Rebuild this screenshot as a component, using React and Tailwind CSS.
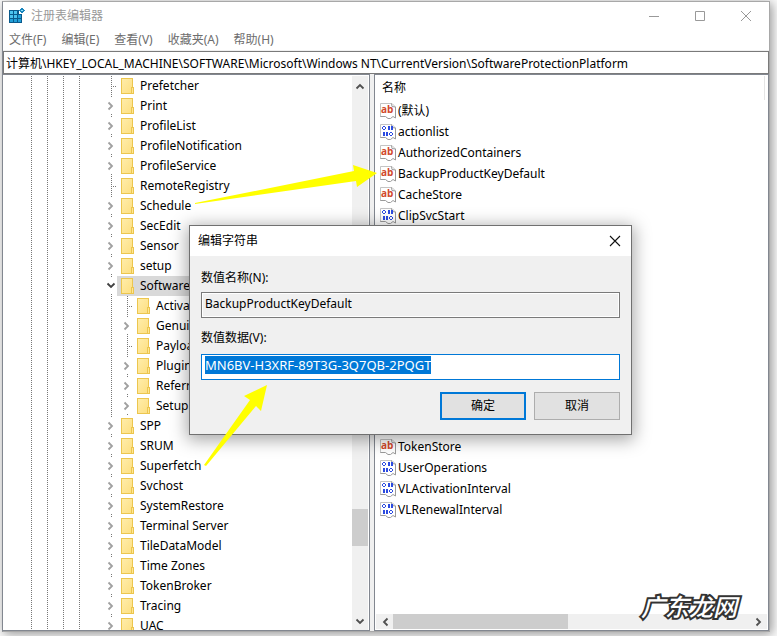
import { useEffect, useRef } from "react"

const menus = ["文件(F)", "编辑(E)", "查看(V)", "收藏夹(A)", "帮助(H)"]

const keys = [
  { name: "Prefetcher", leaf: true },
  { name: "Print" },
  { name: "ProfileList" },
  { name: "ProfileNotification" },
  { name: "ProfileService" },
  { name: "RemoteRegistry", leaf: true },
  { name: "Schedule" },
  { name: "SecEdit" },
  { name: "Sensor" },
  { name: "setup" },
  { name: "SoftwareProtectionPlatform", open: true },
  { name: "Activation", leaf: true, child: true },
  { name: "Genuine", child: true },
  { name: "Payloads", leaf: true, child: true },
  { name: "Plugins", child: true },
  { name: "Referral", child: true },
  { name: "Setup", child: true },
  { name: "SPP" },
  { name: "SRUM" },
  { name: "Superfetch" },
  { name: "Svchost" },
  { name: "SystemRestore" },
  { name: "Terminal Server" },
  { name: "TileDataModel" },
  { name: "Time Zones" },
  { name: "TokenBroker" },
  { name: "Tracing" },
  { name: "UAC" },
]

const firstValues = [
  { name: "(默认)", type: "sz" },
  { name: "actionlist", type: "bin" },
  { name: "AuthorizedContainers", type: "sz" },
  { name: "BackupProductKeyDefault", type: "sz" },
  { name: "CacheStore", type: "sz" },
  { name: "ClipSvcStart", type: "bin" },
]

const lastValues = [
  { name: "TokenStore", type: "sz" },
  { name: "UserOperations", type: "bin" },
  { name: "VLActivationInterval", type: "bin" },
  { name: "VLRenewalInterval", type: "bin" },
]

function RegistryIcon() {
  return (
    <svg width="16" height="16" viewBox="0 0 16 16" shapeRendering="crispEdges">
      <path fill="#0a5a8c" d="M0 2h10v4h3v9H0z" />
      <path fill="#4cc3ee" d="M1 3h3v3H1zM5 3h3v3H5zM1 7h3v3H1zM5 7h3v3H5z" />
      <path fill="#22a0d8" d="M9 7h3v3H9zM1 11h3v3H1zM5 11h3v3H5zM9 11h3v3H9z" />
      <path fill="#1a86bd" d="M12 0h2v1h1v1h1v1h-1v1h-1v1h-2V4h-1V3h-1V2h1V1h1z" />
      <path fill="#8fe0fa" d="M12 2h2v1h-2z" />
    </svg>
  )
}

function FolderIcon() {
  return (
    <svg className="shrink-0" width="13" height="16" viewBox="0 0 13 16">
      <defs>
        <linearGradient id="folder" x1="0" y1="0" x2="1" y2="1">
          <stop offset="0" stopColor="#ffedab" />
          <stop offset="1" stopColor="#fddf80" />
        </linearGradient>
      </defs>
      <rect x="0.5" y="0.5" width="11" height="15" fill="url(#folder)" stroke="#ecc64e" />
      <rect x="10.5" y="9.5" width="2" height="6" fill="#ffe692" stroke="#ecc64e" />
    </svg>
  )
}

function ValueIcon({ type }) {
  return (
    <svg className="shrink-0" width="16" height="16" viewBox="0 0 16 16">
      <path fill="#fff" stroke="#c4c4c4" d="M0.5 14V0.5H12L15.5 4" />
      <path fill="none" stroke="#9a9a9a" d="M11.5 0.5L12 3.5L15.5 4V15L13 13.5L10.5 15.5H8L5.5 13.5H0.5" />
      {type === "sz" ? (
        <text x="1" y="10" fontSize="10" fontWeight="700" fill="#d1482b" fontFamily="Open Sans, sans-serif">
          ab
        </text>
      ) : (
        <path
          fill="#2b4be0"
          fillRule="evenodd"
          shapeRendering="crispEdges"
          d="M3 2h2v1h1v2h-1v1h-2v-1h-1v-2h1zM3 3v2h2v-2zM8 2h2v4h-2zM11 2h2v4h-2zM3 8h2v4h-2zM6 8h2v4h-2zM10 8h2v1h1v2h-1v1h-2v-1h-1v-2h1zM10 9v2h2v-2z"
        />
      )}
    </svg>
  )
}

function Chevron({ className = "", color = "#a0a0a0" }) {
  return (
    <svg className={className} width="8" height="10" viewBox="0 0 8 10">
      <path d="M1.5 1.5L5 5L1.5 8.5" fill="none" stroke={color} strokeWidth="1.8" />
    </svg>
  )
}

function Guide() {
  return (
    <span className="h-full w-px bg-[repeating-linear-gradient(to_bottom,#777777_0_1px,transparent_1px_2px)]" />
  )
}

function TreeRow({ item }) {
  return (
    <li className="flex h-5 items-center pl-7">
      <span className="flex h-full w-4"><Guide /></span>
      <span className="flex h-full w-4"><Guide /></span>
      <span className="flex h-full w-4"><Guide /></span>
      <span className="flex h-full w-6"><Guide /></span>
      {item.child && (
        <span className="flex h-full w-4 pl-2"><Guide /></span>
      )}
      <span className="relative flex h-full w-3.5 items-center pl-2">
        <Guide />
        {item.leaf ? (
          <span className="h-px w-1.5 bg-[repeating-linear-gradient(to_right,transparent_0_1px,#777777_1px_2px)]" />
        ) : (
          <span className="absolute left-1 flex h-4 w-2.5 items-center bg-white">
            <Chevron
              className={item.open ? "rotate-90" : ""}
              color={item.open ? "#404040" : "#a0a0a0"}
            />
          </span>
        )}
      </span>
      <span className={`flex h-full items-center gap-1.5 px-1 ${item.open ? "bg-[#d9d9d9]" : ""}`}>
        <FolderIcon />
        {item.name}
      </span>
    </li>
  )
}

function ValueRow({ value }) {
  return (
    <li className="flex h-[21px] items-center gap-0.5">
      <ValueIcon type={value.type} />
      {value.name}
    </li>
  )
}

function VerticalScrollbar() {
  return (
    <div className="flex w-4 shrink-0 flex-col items-center bg-[#f0f0f0]">
      <span className="flex h-5 items-center"><Chevron className="-rotate-90" color="#505050" /></span>
      <span className="grow-[411]" />
      <span className="h-[37px] w-full bg-[#cdcdcd]" />
      <span className="grow-[68]" />
      <span className="flex h-4 items-center"><Chevron className="rotate-90" color="#505050" /></span>
    </div>
  )
}

function HorizontalScrollbar() {
  return (
    <div className="flex h-[15px] shrink-0 items-center bg-[#f0f0f0]">
      <span className="flex w-[17px] justify-center"><Chevron className="rotate-180" color="#505050" /></span>
      <span className="h-full w-[175px] bg-[#cdcdcd]" />
      <span className="grow" />
      <span className="flex w-[17px] justify-center"><Chevron color="#505050" /></span>
    </div>
  )
}

function EditDialog() {
  const dataRef = useRef(null)

  useEffect(() => {
    dataRef.current.focus()
    dataRef.current.select()
  }, [])

  return (
    <div
      role="dialog"
      aria-labelledby="dialog-title"
      className="absolute top-[223px] left-[186px] w-[443px] border border-[#707070] bg-[#f0f0f0] shadow-[0_3px_16px_2px_rgba(0,0,0,0.35)]"
    >
      <div className="flex h-[30px] items-center justify-between bg-white pr-2 pl-2">
        <h2 id="dialog-title">编辑字符串</h2>
        <button aria-label="关闭" className="flex h-4 w-4 items-center justify-center">
          <svg width="12" height="12" viewBox="0 0 12 12">
            <path d="M1 1L11 11M11 1L1 11" stroke="#111" strokeWidth="1.1" />
          </svg>
        </button>
      </div>
      <form className="flex flex-col px-[11px] pt-3 pb-3.5">
        <label htmlFor="value-name" className="h-5 leading-5">数值名称(N):</label>
        <input
          id="value-name"
          readOnly
          defaultValue="BackupProductKeyDefault"
          className="mt-1 h-[26px] border border-[#7a7a7a] px-[3px] pb-1 shadow-[inset_0_0_0_1px_#ffffff] outline-none"
        />
        <label htmlFor="value-data" className="mt-2.5 h-5 leading-5">数值数据(V):</label>
        <input
          id="value-data"
          ref={dataRef}
          defaultValue="MN6BV-H3XRF-89T3G-3Q7QB-2PQGT"
          className="mt-1.5 h-[26px] border border-[#0078d7] bg-white px-[3px] pb-1 text-[13px] outline-none selection:bg-[#0078d7] selection:text-white"
        />
        <div className="mt-3 flex justify-end gap-2">
          <button type="button" className="h-7 w-[86px] border-2 border-[#0078d7] bg-[#e1e1e1]">确定</button>
          <button type="button" className="h-7 w-[86px] border border-[#adadad] bg-[#e1e1e1]">取消</button>
        </div>
      </form>
    </div>
  )
}

export default function App() {
  return (
    <div className="h-screen overflow-hidden bg-[#fafafa] pt-px pr-[7px] pb-1 pl-0.5 font-['Noto_Sans','Noto_Sans_CJK_SC',sans-serif] text-xs text-black">
      <div className="relative flex h-full flex-col border border-[#a8a8a8] border-l-[#828790] bg-white shadow-[2px_2px_10px_rgba(0,0,0,0.4)]">
        <header className="flex h-7 items-center justify-between pr-[17px] pl-1.5">
          <div className="flex items-center gap-1.5 text-[#999999]">
            <RegistryIcon />
            <h1>注册表编辑器</h1>
          </div>
          <div className="flex items-center gap-[34px]">
            <button aria-label="最小化">
              <svg width="12" height="12" viewBox="0 0 12 12"><path d="M1 6.5H11" stroke="#999" /></svg>
            </button>
            <button aria-label="最大化">
              <svg width="12" height="12" viewBox="0 0 12 12"><path d="M1.5 1.5H10.5V10.5H1.5Z" fill="none" stroke="#999" /></svg>
            </button>
            <button aria-label="关闭">
              <svg width="12" height="12" viewBox="0 0 12 12"><path d="M1 1L11 11M11 1L1 11" stroke="#999" /></svg>
            </button>
          </div>
        </header>

        <nav className="flex h-[21px] items-center gap-[15px] border-b border-[#f0f0f0] pl-1.5 text-[#6d6d6d]">
          {menus.map((menu) => (
            <button key={menu}>{menu}</button>
          ))}
        </nav>

        <input
          aria-label="地址"
          defaultValue="计算机\HKEY_LOCAL_MACHINE\SOFTWARE\Microsoft\Windows NT\CurrentVersion\SoftwareProtectionPlatform"
          className="h-[23px] w-full border border-[#7a7a7a] px-0.5 outline-none"
        />

        <main className="flex min-h-0 flex-1 bg-[#f0f0f0]">
          <section className="flex w-[367px] shrink-0 border-t border-r border-b border-[#828790] bg-white pt-px pr-px">
            <ul className="min-w-0 flex-1 overflow-hidden whitespace-nowrap">
              {keys.map((item) => (
                <TreeRow key={item.name} item={item} />
              ))}
            </ul>
            <VerticalScrollbar />
          </section>

          <section className="ml-1 flex min-w-0 flex-1 flex-col border border-[#828790] bg-white p-px">
            <div className="mr-0.5 flex h-6 items-center border-r border-[#e5e5e5] pl-1.5">名称</div>
            <ul className="flex-1 overflow-hidden pl-1">
              {firstValues.map((value) => (
                <ValueRow key={value.name} value={value} />
              ))}
              <li className="h-[210px]" aria-hidden="true" />
              {lastValues.map((value) => (
                <ValueRow key={value.name} value={value} />
              ))}
            </ul>
            <HorizontalScrollbar />
          </section>
        </main>

        <EditDialog />

        {/* pointers to the key value */}
        <svg className="pointer-events-none absolute top-0 left-0" width="400" height="480" viewBox="3 2 400 480">
          <path fill="#ffff00" d="M195 203L354 171L353 165L377 173L357 187L356 181L195 204Z" />
          <path fill="#ffff00" d="M204 465L250 400L244 396L267 385L261 411L256 406L206 466Z" />
        </svg>

        <p className="absolute right-8 bottom-2 text-2xl leading-8 font-medium text-white italic [-webkit-text-stroke:4px_#333333] [paint-order:stroke_fill]">
          广东龙网
        </p>
      </div>
    </div>
  )
}
